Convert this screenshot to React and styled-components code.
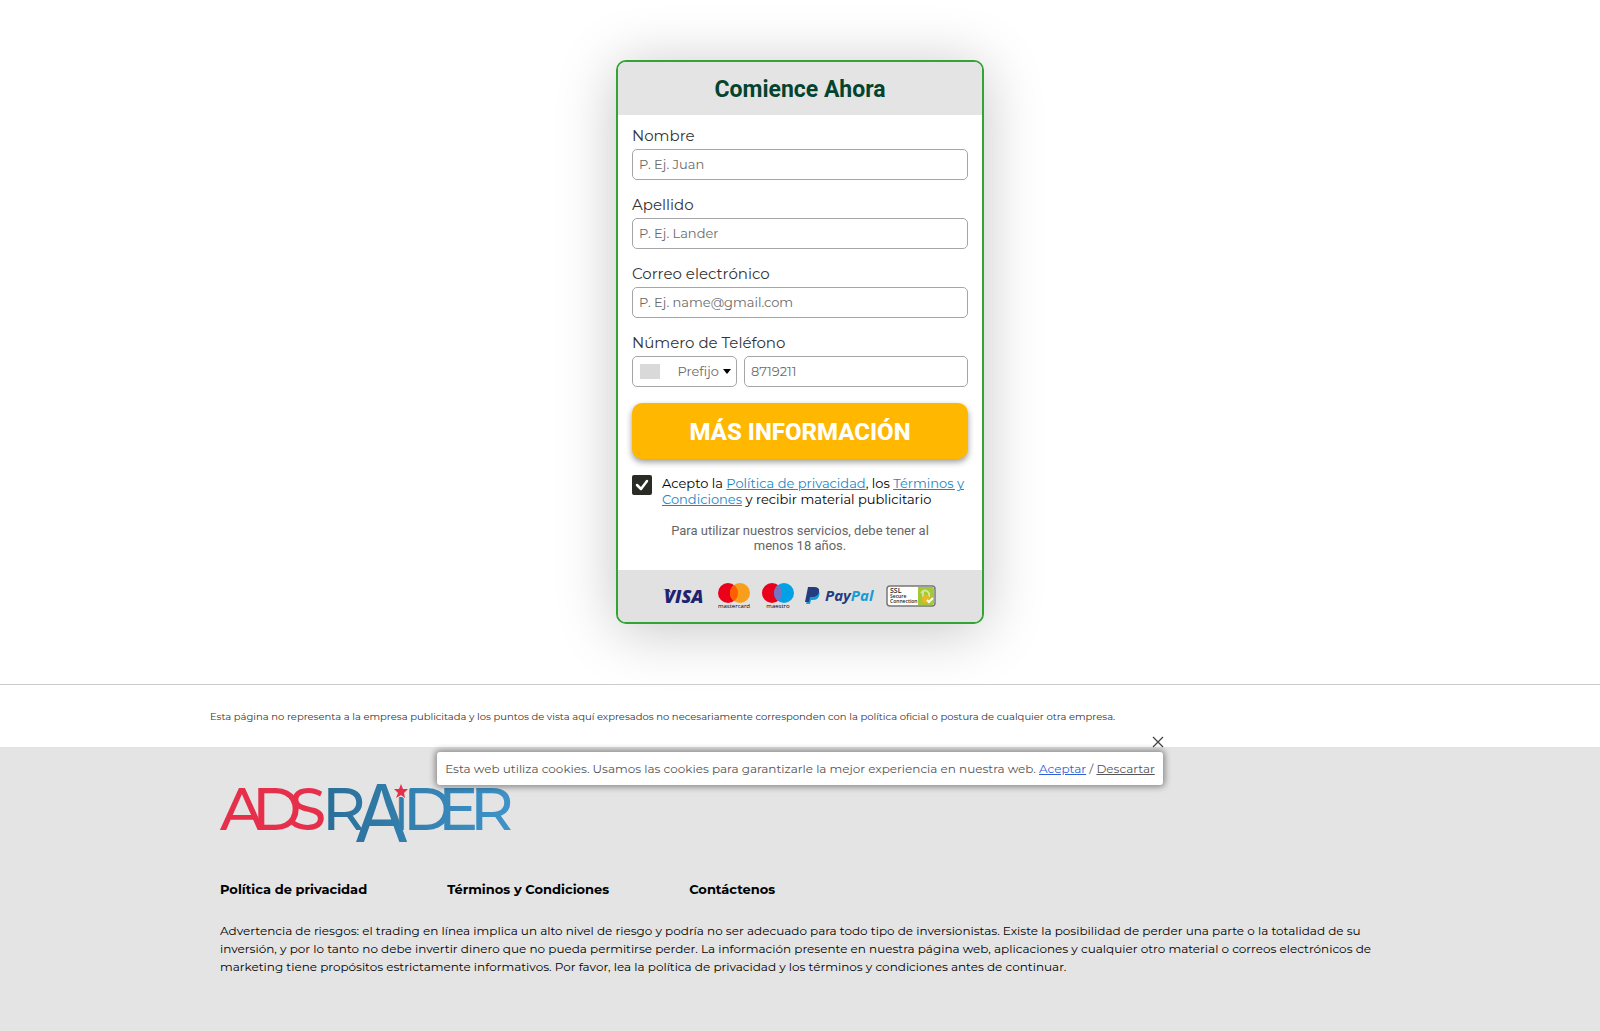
import React from "react";
import styled, { createGlobalStyle } from "styled-components";

const GlobalStyle = createGlobalStyle`
  *, *::before, *::after { box-sizing: border-box; }
  body {
    margin: 0;
    background: #fff;
    color: #000;
    font-family: Montserrat, Inter, "Liberation Sans", sans-serif;
    font-size: 13px;
  }
`;

const Page = styled.div`
  display: flex;
  flex-direction: column;
  min-height: 100vh;
`;

const Main = styled.main`
  display: flex;
  justify-content: center;
  padding: 60px 16px;
`;

const Card = styled.form`
  width: 100%;
  max-width: 368px;
  border: 2px solid #33a333;
  border-radius: 10px;
  background: #fff;
  overflow: hidden;
  box-shadow: 0 6px 60px rgba(0, 0, 0, 0.23);
`;

const CardTitle = styled.h1`
  margin: 0;
  padding: 13px 12px 11px;
  background: #e4e4e4;
  color: #04442f;
  font: 700 23px/29px Roboto, sans-serif;
  text-align: center;
`;

const Fields = styled.div`
  display: flex;
  flex-direction: column;
  gap: 16px;
  padding: 12px 14px 17px;
`;

const Field = styled.div`
  display: flex;
  flex-direction: column;
  gap: 4px;
`;

const Label = styled.label`
  color: #333;
  font-size: 15px;
  line-height: 18px;
`;

const Control = styled.div`
  display: flex;
  align-items: center;
  min-width: 0;
  height: 31px;
  padding: ${(p) => (p.$inset ? "0 5px 0 7px" : "0")};
  border: 1px solid #a6a6a6;
  border-radius: 5px;
  background: #fff;
`;

const TextInput = styled.input`
  width: 100%;
  height: 29px;
  min-width: 0;
  border: 0;
  outline: 0;
  padding: 0 6px 2px;
  border-radius: 5px;
  background: transparent;
  color: #333;
  font: inherit;
  &::placeholder { color: #6b6b6b; opacity: 1; }
`;

const PhoneRow = styled.div`
  display: grid;
  grid-template-columns: 105px 1fr;
  gap: 7px;
`;

const Flag = styled.span`
  flex: none;
  width: 20px;
  height: 15px;
  background: #d9d9d9;
`;

const Prefix = styled.select`
  flex: 1;
  min-width: 0;
  height: 29px;
  border: 0;
  outline: 0;
  padding: 0 4px 2px 0;
  appearance: none;
  background: transparent;
  color: #6b6b6b;
  font: inherit;
  text-align-last: right;
`;

const Submit = styled.button`
  height: 56px;
  padding: 2px 6px 0;
  border: 0;
  border-radius: 10px;
  background: #ffb700;
  color: #fff;
  font: 800 24px/30px Roboto, sans-serif;
  text-transform: uppercase;
  box-shadow: 0 3px 6px rgba(0, 0, 0, 0.4);
  cursor: pointer;
`;

const Consent = styled.div`
  display: flex;
  align-items: flex-start;
  gap: 10px;
  line-height: 16px;
`;

const CheckBox = styled.input`
  appearance: none;
  flex: none;
  width: 20px;
  height: 20px;
  margin: 0;
  border-radius: 2px;
  background: #2b2b26;
`;

const CheckWrap = styled.span`
  position: relative;
  display: flex;
  svg { position: absolute; inset: 0; pointer-events: none; }
`;

const PolicyLink = styled.a`
  color: #1b87c4;
  text-decoration: underline;
`;

const AgeNote = styled.p`
  margin: 0;
  padding: 0 32px;
  color: #666;
  font: 400 13px/15px Roboto, sans-serif;
  text-align: center;
`;

const Payments = styled.div`
  display: flex;
  align-items: center;
  justify-content: center;
  height: 52px;
  background: #e1e1e1;
  svg { display: block; }
`;

const Disclaimer = styled.section`
  border-top: 1px solid #ccc;
  padding: 25px 16px 23px;
  p {
    max-width: 1180px;
    margin: 0 auto;
    color: #333;
    font-size: 10px;
    line-height: 14px;
  }
`;

const Footer = styled.footer`
  position: relative;
  flex: 1;
  padding: 36px 16px;
  background: #e4e4e4;
`;

const FooterInner = styled.div`
  display: flex;
  flex-direction: column;
  max-width: 1160px;
  margin: 0 auto;
  svg { display: block; overflow: visible; }
`;

const FooterNav = styled.nav`
  display: flex;
  flex-wrap: wrap;
  gap: 80px;
  margin-top: 37px;
  a {
    color: #000;
    font-weight: 700;
    line-height: 16px;
    text-decoration: none;
  }
`;

const Risk = styled.p`
  margin: 25px 0 0;
  font-size: 12px;
  line-height: 18px;
`;

const CookieBar = styled.div`
  position: absolute;
  top: 5px;
  left: 50%;
  transform: translateX(-50%);
  width: 726px;
  max-width: 96%;
  padding: 8px 7px;
  border-radius: 3px;
  background: #fff;
  box-shadow: 0 0 6px 2px rgba(0, 0, 0, 0.4);
  color: #555;
  font-size: 12px;
  line-height: 17px;
  text-align: center;
  a { color: #555; }
  a:first-of-type { color: #2f62d8; }
`;

const CloseButton = styled.button`
  position: absolute;
  top: -16px;
  right: -1px;
  width: 12px;
  height: 12px;
  border: 0;
  padding: 0;
  background: none;
  svg { display: block; }
`;

function TextField({ id, label, placeholder, type = "text" }) {
  return (
    <Field>
      <Label htmlFor={id}>{label}</Label>
      <Control>
        <TextInput id={id} type={type} placeholder={placeholder} />
      </Control>
    </Field>
  );
}

function PaymentLogos() {
  return (
    <svg width="274" height="30" viewBox="0 0 274 30" fontFamily="Open Sans, sans-serif">
      <text x="1" y="22" fontSize="18" fontWeight="800" fontStyle="italic" fill="#1d2370">VISA</text>
      <path d="M0 8h6l2 4q-3-3-8-4" fill="#1d2370" />
      <circle cx="65" cy="12" r="10" fill="#eb001b" />
      <circle cx="77" cy="12" r="10" fill="#f79e1b" />
      <path d="M71 4a10 10 0 0 1 0 16a10 10 0 0 1 0-16" fill="#ff5f00" />
      <text x="71" y="27" fontSize="6" fontWeight="500" textAnchor="middle">mastercard</text>
      <circle cx="109" cy="12" r="10" fill="#eb001b" />
      <circle cx="121" cy="12" r="10" fill="#00a2e5" />
      <path d="M115 4a10 10 0 0 1 0 16a10 10 0 0 1 0-16" fill="#7673c0" />
      <text x="115" y="27" fontSize="6" fontWeight="500" textAnchor="middle">maestro</text>
      <path d="M147 9h6q5 1 3 6q-1 4-6 4h-2l-1 4h-4z" fill="#179bd7" />
      <path d="M145 6h6q6 0 5 5q-1 5-7 5h-2l-1 5h-4z" fill="#253b80" />
      <text x="162" y="20" fontSize="15" fontWeight="700" fontStyle="italic" fill="#253b80">Pay<tspan fill="#179bd7">Pal</tspan></text>
      <rect x="224" y="5" width="48" height="20" rx="3" fill="#fff" stroke="#777" strokeWidth="1.5" />
      <path d="M255 6h14q2 0 2 2v14q0 2-2 2h-14z" fill="#a5c936" />
      <path d="M258 12q4-5 8 0v5M260 11v5" fill="none" stroke="#d7e59a" strokeWidth="2" />
      <circle cx="263" cy="18" r="4" fill="#e8b923" />
      <path d="m264 19 2 2 4-4" fill="none" stroke="#fff" strokeWidth="2" />
      <g fontSize="5" fontWeight="600" fill="#222">
        <text x="227" y="12" fontSize="7">SSL</text>
        <text x="227" y="17">Secure</text>
        <text x="227" y="22">Connection</text>
      </g>
    </svg>
  );
}

function BrandLogo() {
  return (
    <svg width="290" height="61" viewBox="0 0 290 61" fontFamily="Montserrat, Inter, sans-serif" fontSize="60" fontWeight="500" role="img" aria-label="AdsRaider">
      <defs>
        <linearGradient id="brand" gradientUnits="userSpaceOnUse" x1="107" x2="290" y1="0" y2="0">
          <stop offset="0" stopColor="#2a6f98" />
          <stop offset="1" stopColor="#3f93c9" />
        </linearGradient>
      </defs>
      <g fill="#e6304b">
        <text x="0" y="47">A</text>
        <text x="32" y="47">D</text>
        <text x="69" y="47">S</text>
      </g>
      <g fill="url(#brand)">
        <text x="102" y="47">R</text>
        <text x="134" y="59" fontFamily="Inter, sans-serif" fontSize="80" fontWeight="400">A</text>
        <text x="174" y="47" fontSize="47">I</text>
        <text x="183" y="47">D</text>
        <text x="218" y="47">E</text>
        <text x="250" y="47">R</text>
      </g>
      <path d="m181 1 2 5h5l-4 4 1 5-4-3-5 3 2-5-4-4h5z" fill="#e6304b" stroke="#e4e4e4" paintOrder="stroke" strokeWidth="2" />
    </svg>
  );
}

export default function App() {
  return (
    <Page>
      <GlobalStyle />
      <Main>
        <Card onSubmit={(e) => e.preventDefault()}>
          <CardTitle>Comience Ahora</CardTitle>
          <Fields>
            <TextField id="first" label="Nombre" placeholder="P. Ej. Juan" />
            <TextField id="last" label="Apellido" placeholder="P. Ej. Lander" />
            <TextField id="email" type="email" label="Correo electrónico" placeholder="P. Ej. name@gmail.com" />
            <Field>
              <Label htmlFor="phone">Número de Teléfono</Label>
              <PhoneRow>
                <Control $inset>
                  <Flag />
                  <Prefix aria-label="Prefijo" defaultValue="">
                    <option value="">Prefijo</option>
                  </Prefix>
                  <svg width="8" height="5" viewBox="0 0 8 5"><path d="M0 0h8L4 5z" /></svg>
                </Control>
                <Control>
                  <TextInput id="phone" type="tel" placeholder="8719211" />
                </Control>
              </PhoneRow>
            </Field>
            <Submit type="submit">Más información</Submit>
            <Consent>
              <CheckWrap>
                <CheckBox type="checkbox" id="consent" defaultChecked />
                <svg width="20" height="20" viewBox="0 0 20 20">
                  <path d="m5 10 4 4 6-8" fill="none" stroke="#fff" strokeWidth="2.5" strokeLinecap="round" strokeLinejoin="round" />
                </svg>
              </CheckWrap>
              <label htmlFor="consent">
                Acepto la <PolicyLink href="#privacidad">Política de privacidad</PolicyLink>, los{" "}
                <PolicyLink href="#terminos">Términos y Condiciones</PolicyLink> y recibir material publicitario
              </label>
            </Consent>
            <AgeNote>Para utilizar nuestros servicios, debe tener al menos 18 años.</AgeNote>
          </Fields>
          <Payments><PaymentLogos /></Payments>
        </Card>
      </Main>
      <Disclaimer>
        <p>Esta página no representa a la empresa publicitada y los puntos de vista aquí expresados no necesariamente corresponden con la política oficial o postura de cualquier otra empresa.</p>
      </Disclaimer>
      <Footer>
        <FooterInner>
          <BrandLogo />
          <FooterNav>
            <a href="#privacidad">Política de privacidad</a>
            <a href="#terminos">Términos y Condiciones</a>
            <a href="#contacto">Contáctenos</a>
          </FooterNav>
          <Risk>
            Advertencia de riesgos: el trading en línea implica un alto nivel de riesgo y podría no ser adecuado para todo tipo de inversionistas. Existe la posibilidad de perder una parte o la totalidad de su inversión, y por lo tanto no debe invertir dinero que no pueda permitirse perder. La información presente en nuestra página web, aplicaciones y cualquier otro material o correos electrónicos de marketing tiene propósitos estrictamente informativos. Por favor, lea la política de privacidad y los términos y condiciones antes de continuar.
          </Risk>
        </FooterInner>
        <CookieBar>
          <CloseButton type="button" aria-label="Cerrar">
            <svg width="12" height="12" viewBox="0 0 12 12"><path d="m1 1 10 10M11 1 1 11" stroke="#444" strokeWidth="1.3" /></svg>
          </CloseButton>
          Esta web utiliza cookies. Usamos las cookies para garantizarle la mejor experiencia en nuestra web.{" "}
          <a href="#aceptar">Aceptar</a> / <a href="#descartar">Descartar</a>
        </CookieBar>
      </Footer>
    </Page>
  );
}
